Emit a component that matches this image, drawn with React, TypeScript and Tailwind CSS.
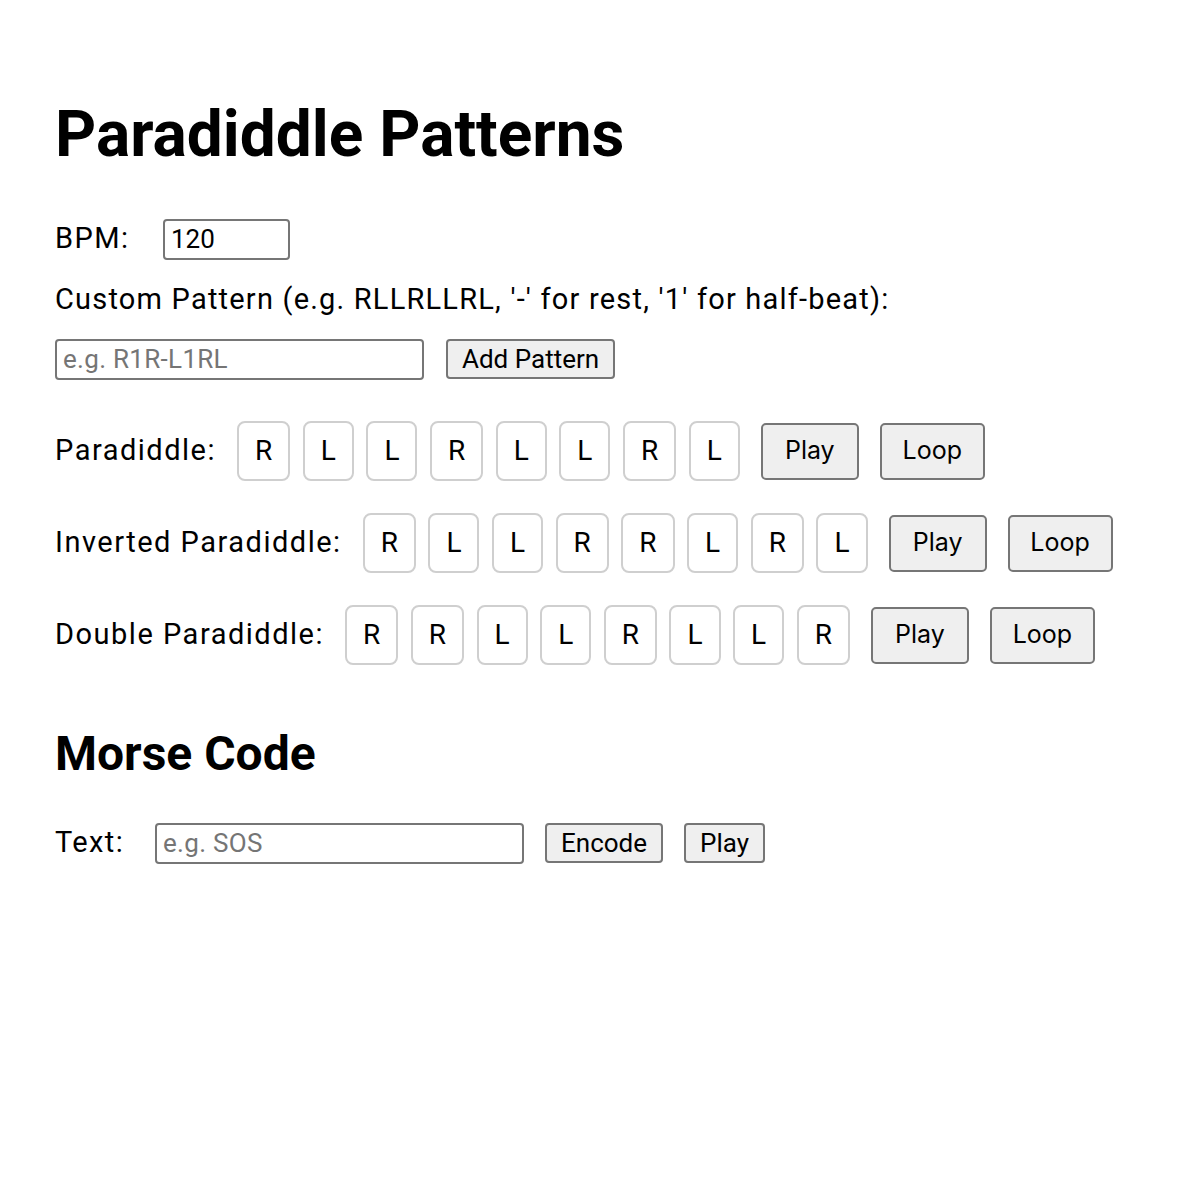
import { useState } from "react";

const patterns = [
  { name: "Paradiddle", beats: "RLLRLLRL" },
  { name: "Inverted Paradiddle", beats: "RLLRRLRL" },
  { name: "Double Paradiddle", beats: "RRLLRLLR" },
];

const smallBtn =
  "h-[40px] px-[14px] border-2 border-[#767676] bg-[#efefef] rounded-[4px] text-[26px] leading-none text-black";

const bigBtn =
  "ml-[21px] h-[57px] flex items-center justify-center border-2 border-[#767676] bg-[#efefef] rounded-[5px] text-[25px] font-['Inter',sans-serif]";

export default function App() {
  const [bpm, setBpm] = useState("120");
  const [custom, setCustom] = useState("");
  const [text, setText] = useState("");

  return (
    <div className="pl-[55px] text-black font-['Roboto',sans-serif] bg-white min-h-[1200px]">
      <h1 className="mt-0 pt-[103px] text-[64px] leading-[64px] font-bold">Paradiddle Patterns</h1>

      <div className="mt-[52px] flex items-center h-[40px]">
        <label className="text-[29px] tracking-[1.4px] w-[108px]">BPM:</label>
        <input
          type="number"
          value={bpm}
          onChange={(e) => setBpm(e.target.value)}
          className="w-[127px] h-[41px] px-[6px] border-2 border-[#767676] rounded-[4px] text-[26px] outline-none [appearance:textfield]"
        />
      </div>

      <div className="mt-[20px] h-[40px] leading-[40px] text-[29px] tracking-[1.2px]">
        Custom Pattern (e.g. RLLRLLRL, '-' for rest, '1' for half-beat):
      </div>

      <div className="mt-[20px] flex items-center h-[40px] gap-[22px]">
        <input
          type="text"
          value={custom}
          onChange={(e) => setCustom(e.target.value)}
          placeholder="e.g. R1R-L1RL"
          className="w-[369px] h-[41px] px-[6px] border-2 border-[#767676] rounded-[4px] text-[26px] tracking-[0.3px] outline-none placeholder:text-[#757575]"
        />
        <button className={smallBtn}>Add Pattern</button>
      </div>

      <div className="mt-[42px] flex flex-col gap-[32px]">
        {patterns.map((p) => (
          <div key={p.name} className="flex items-center h-[60px]">
            <span className="text-[29px] tracking-[1.5px] mr-[21px]">{p.name}:</span>
            <div className="flex gap-[12.5px]">
              {p.beats.split("").map((b, i) => (
                <div
                  key={i}
                  className="h-[60px] px-[16px] flex items-center justify-center border-2 border-[#cfcfcf] rounded-[8px] text-[28px]"
                >
                  {b}
                </div>
              ))}
            </div>
            <button className={bigBtn + " w-[98px]"}>Play</button>
            <button className={bigBtn + " w-[105px]"}>Loop</button>
          </div>
        ))}
      </div>

      <h2 className="mt-[65px] text-[48px] leading-[48px] font-bold">Morse Code</h2>

      <div className="mt-[45px] flex items-center h-[40px]">
        <label className="text-[29px] tracking-[1.4px] w-[100px]">Text:</label>
        <input
          type="text"
          value={text}
          onChange={(e) => setText(e.target.value)}
          placeholder="e.g. SOS"
          className="w-[369px] h-[41px] px-[6px] border-2 border-[#767676] rounded-[4px] text-[26px] tracking-[0.3px] outline-none placeholder:text-[#757575]"
        />
        <button className={smallBtn + " ml-[21px]"}>Encode</button>
        <button className={smallBtn + " ml-[21px]"}>Play</button>
      </div>
    </div>
  );
}
